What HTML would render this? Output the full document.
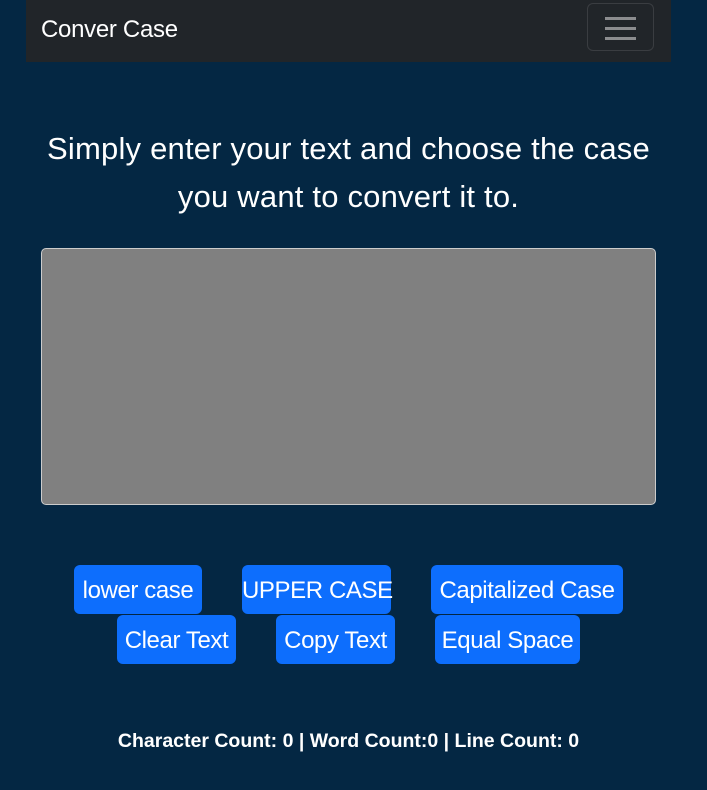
<!DOCTYPE html>
<html><head><style>
body{margin:0;width:707px;height:790px;background:#042743;font-family:"Liberation Sans",sans-serif;color:#fff;position:relative;overflow:hidden}
.nav{position:absolute;left:26px;top:0;width:645px;height:62px;background:#212529}
.brand{position:absolute;left:15px;top:16px;font-size:24px;letter-spacing:-0.3px}
.tog{position:absolute;left:561px;top:3px;width:67px;height:48px;border:1px solid #3a3d41;border-radius:6px;box-sizing:border-box}
.tog i{position:absolute;left:17px;width:31px;height:3px;background:#8c8d8f}
h1{position:absolute;left:0;width:697px;top:125px;margin:0;font-weight:normal;font-size:31px;line-height:48px;text-align:center;letter-spacing:0.2px}
.ta{position:absolute;left:41px;top:248px;width:615px;height:257px;background:#808080;border:1px solid #ccc;border-radius:5px;box-sizing:border-box}
.b{position:absolute;background:#0d6efd;border-radius:6px;font-size:24px;text-align:center;line-height:52px;height:49px;white-space:nowrap;letter-spacing:-0.4px}
.c{position:absolute;left:0;width:697px;top:730px;text-align:center;font-weight:bold;font-size:19.5px}
</style></head><body>
<div class="nav"><div class="brand">Conver Case</div><div class="tog"><i style="top:13px"></i><i style="top:23px"></i><i style="top:33px"></i></div></div>
<h1>Simply enter your text and choose the case<br>you want to convert it to.</h1>
<div class="ta"></div>
<div class="b" style="left:74px;top:565px;width:128px">lower case</div>
<div class="b" style="left:242px;top:565px;width:149px">UPPER CASE</div>
<div class="b" style="left:431px;top:565px;width:192px">Capitalized Case</div>
<div class="b" style="left:117px;top:615px;width:119px">Clear Text</div>
<div class="b" style="left:276px;top:615px;width:119px">Copy Text</div>
<div class="b" style="left:435px;top:615px;width:145px">Equal Space</div>
<div class="c">Character Count: 0 | Word Count:0 | Line Count: 0</div>
</body></html>
